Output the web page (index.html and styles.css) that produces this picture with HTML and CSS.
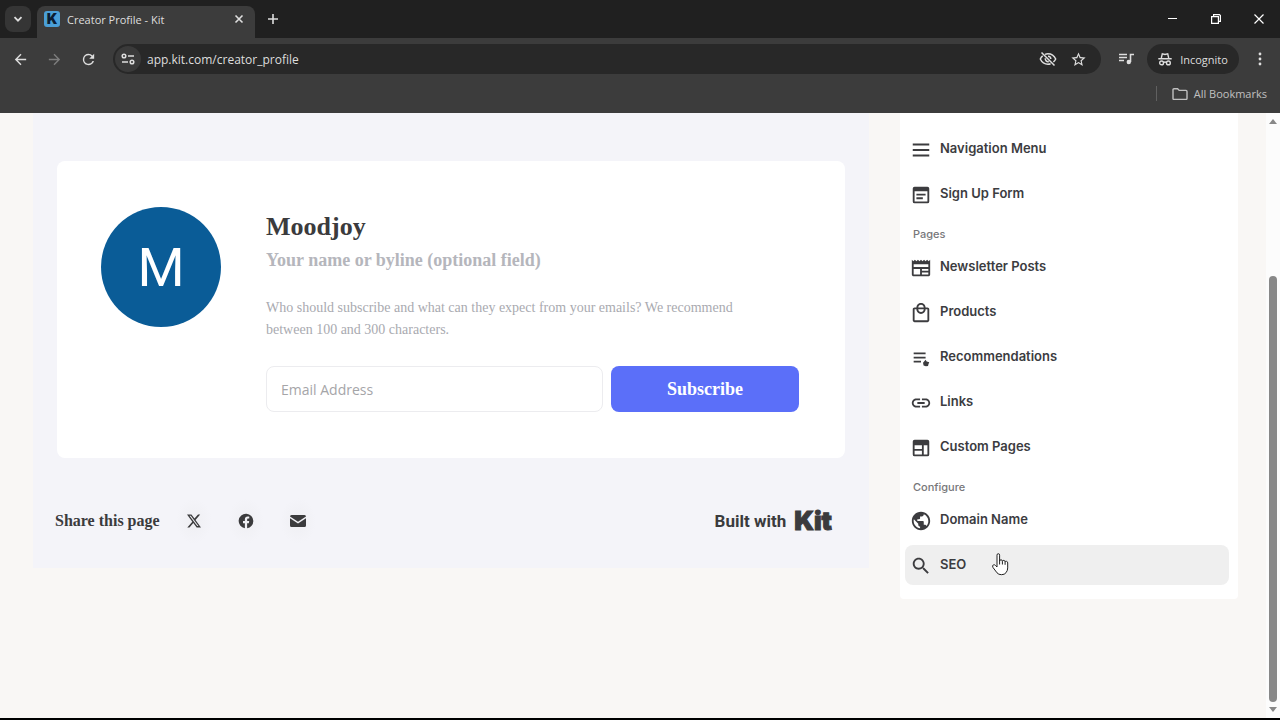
FILE: index.html
```html
<!DOCTYPE html>
<html lang="en">
<head>
  <meta charset="UTF-8">
  <meta name="viewport" content="width=device-width, initial-scale=1.0">
  <title>Creator Profile - Kit</title>
  <link rel="stylesheet" href="styles.css">
</head>
<body>
  <div class="browser">
    <header>
      <div class="tab-strip">
        <button class="tab-search" aria-label="Search tabs">
          <svg width="10" height="10" viewBox="0 0 10 10" fill="none" stroke="currentColor" stroke-width="1.8"><path d="M1.500 3.200 5 6.700 8.500 3.200"/></svg>
        </button>
        <div class="tab">
          <span class="favicon">K</span>
          <span class="tab-title">Creator Profile - Kit</span>
          <button class="icon-button" aria-label="Close tab">
            <svg width="10" height="10" viewBox="0 0 10 10" stroke="currentColor" stroke-width="1.6"><path d="M1.500 1.500l7 7M8.500 1.500l-7 7"/></svg>
          </button>
        </div>
        <button class="icon-button new-tab" aria-label="New tab">
          <svg width="12" height="12" viewBox="0 0 12 12" stroke="currentColor" stroke-width="1.6"><path d="M6 1v10M1 6h10"/></svg>
        </button>
        <div class="window-buttons">
          <button class="icon-button" aria-label="Minimize">
            <svg width="10" height="10" viewBox="0 0 10 10" stroke="currentColor"><path d="M0 4.500h9"/></svg>
          </button>
          <button class="icon-button" aria-label="Restore">
            <svg width="10" height="10" viewBox="0 0 10 10" fill="none" stroke="currentColor" stroke-width="1.200"><path d="M.6 2.600h6.800v6.800H.6zM2.600 2.600v-2h5.800l1 1v5.800h-2"/></svg>
          </button>
          <button class="icon-button" aria-label="Close">
            <svg width="10" height="10" viewBox="0 0 10 10" stroke="currentColor" stroke-width="1.200"><path d="M.5.5l9 9M9.500.5l-9 9"/></svg>
          </button>
        </div>
      </div>

      <div class="toolbar">
        <button class="icon-button" aria-label="Back">
          <svg width="17" height="17" viewBox="0 0 24 24" fill="currentColor"><path d="M20 11H7.830l5.590-5.590L12 4l-8 8 8 8 1.410-1.410L7.830 13H20v-2z"/></svg>
        </button>
        <button class="icon-button disabled" aria-label="Forward">
          <svg width="17" height="17" viewBox="0 0 24 24" fill="currentColor"><path d="M12 4l-1.410 1.410L16.170 11H4v2h12.170l-5.580 5.590L12 20l8-8z"/></svg>
        </button>
        <button class="icon-button" aria-label="Reload">
          <svg width="17" height="17" viewBox="0 0 24 24" fill="currentColor"><path d="M17.650 6.350A7.960 7.960 0 0 0 12 4a8 8 0 1 0 7.730 10h-2.080A6 6 0 1 1 12 6c1.660 0 3.140.69 4.220 1.780L13 11h7V4l-2.350 2.350z"/></svg>
        </button>
        <div class="address-bar">
          <button class="site-info" aria-label="Site information">
            <svg width="14" height="12" viewBox="0 0 14 12" fill="none" stroke="currentColor" stroke-width="1.500"><circle cx="3" cy="3" r="1.800"/><path d="M7 3h6M1 9h6"/><circle cx="11" cy="9" r="1.800"/></svg>
          </button>
          <input class="url" type="text" value="app.kit.com/creator_profile" aria-label="Address">
          <button class="icon-button" aria-label="Third-party cookies blocked">
            <svg width="18" height="16" viewBox="0 0 18 16" fill="none" stroke="currentColor" stroke-width="1.500"><path d="M6 3.400A8 8 0 0 1 9 2.800c3.500 0 6.200 2 7.700 5.200a9 9 0 0 1-2.300 3M11.600 12.700a8 8 0 0 1-2.600.5C5.500 13.200 2.800 11.200 1.300 8a9 9 0 0 1 2.400-3.100M2.500 1.500l13 13M9 5.200A2.800 2.800 0 0 1 11.800 8M6.400 7.200a2.800 2.800 0 0 0 3.400 3.400"/></svg>
          </button>
          <button class="icon-button" aria-label="Bookmark this tab">
            <svg width="17" height="17" viewBox="0 0 24 24" fill="currentColor"><path d="M22 9.240l-7.190-.62L12 2 9.190 8.630 2 9.240l5.460 4.730L5.820 21 12 17.270 18.180 21l-1.630-7.030L22 9.240zM12 15.400l-3.760 2.270 1-4.280-3.320-2.880 4.380-.38L12 6.100l1.710 4.040 4.380.38-3.320 2.880 1 4.280L12 15.400z"/></svg>
          </button>
        </div>
        <button class="icon-button" aria-label="Media controls">
          <svg width="16" height="14" viewBox="0 0 16 14" fill="none" stroke="currentColor" stroke-width="1.600"><path d="M1 2.500h8M1 5.500h8M1 8.500h5M12.500 10V2.500H16"/><circle cx="10.800" cy="10" r="1.400" fill="currentColor"/></svg>
        </button>
        <button class="incognito">
          <svg width="14" height="14" viewBox="0 0 14 14" fill="none" stroke="currentColor" stroke-width="1.400"><path d="M3.300 6 4.300 1.800l2.700.7 2.700-.7L10.700 6M.3 6.700h13.400M5.600 10.500q1.400-1 2.800 0"/><circle cx="3.600" cy="10.900" r="1.900"/><circle cx="10.400" cy="10.900" r="1.900"/></svg>
          Incognito
        </button>
        <button class="icon-button" aria-label="Browser menu">
          <svg width="4" height="14" viewBox="0 0 4 14" fill="currentColor"><circle cx="2" cy="2" r="1.400"/><circle cx="2" cy="7" r="1.400"/><circle cx="2" cy="12" r="1.400"/></svg>
        </button>
      </div>

      <div class="bookmarks-bar">
        <button class="bookmarks">
          <svg width="16" height="12" viewBox="0 0 16 12" fill="none" stroke="currentColor" stroke-width="1.400"><path d="M1 1.700q0-1 1-1h3.600l1.600 1.700H14q1 0 1 1v7q0 1-1 1H2q-1 0-1-1z"/></svg>
          All Bookmarks
        </button>
      </div>
    </header>

    <div class="viewport">
      <div class="page">
        <main class="preview">
          <section class="profile-card">
            <div class="avatar">M</div>
            <div class="profile">
              <h1>Moodjoy</h1>
              <p class="byline">Your name or byline (optional field)</p>
              <p class="description">Who should subscribe and what can they expect from your emails? We recommend between 100 and 300 characters.</p>
              <form class="subscribe-form">
                <input type="email" placeholder="Email Address" aria-label="Email Address">
                <button type="submit">Subscribe</button>
              </form>
            </div>
          </section>
          <footer class="share">
            <span class="share-label">Share this page</span>
            <a href="#" class="share-link" aria-label="Share on X">
              <svg width="14" height="14" viewBox="0 0 24 24" fill="currentColor"><path d="M18.900 1h3.700l-8 9.200L24 23h-7.400l-5.800-7.600L4.200 23H.5l8.600-9.800L0 1h7.600l5.200 6.900zm-1.300 19.700h2L6.500 3.100H4.300z"/></svg>
            </a>
            <a href="#" class="share-link" aria-label="Share on Facebook">
              <svg width="16" height="16" viewBox="0 0 24 24" fill="currentColor"><path d="M23 12a11 11 0 1 0-12.700 10.900v-7.700H7.500V12h2.800V9.600c0-2.800 1.600-4.300 4.100-4.300 1.200 0 2.500.2 2.500.2v2.700h-1.400c-1.400 0-1.800.9-1.800 1.700V12h3.100l-.5 3.200h-2.600v7.700A11 11 0 0 0 23 12z"/></svg>
            </a>
            <a href="#" class="share-link" aria-label="Share by email">
              <svg width="16" height="12" viewBox="0 0 16 12" fill="currentColor"><path d="M1.500 0h13Q16 0 16 1.500L8 6.800 0 1.500Q0 0 1.500 0zM0 3.200l8 5.300 8-5.300v7.300q0 1.500-1.500 1.500h-13Q0 12 0 10.500z"/></svg>
            </a>
            <a href="#" class="built-with">Built with <strong>Kit</strong></a>
          </footer>
        </main>

        <aside class="sidebar">
          <nav>
            <a href="#" class="item">
              <svg viewBox="0 0 24 24"><path d="M3 19h18v-2H3v2zm0-6h18v-2H3v2zm0-8v2h18V5H3z"/></svg>
              Navigation Menu
            </a>
            <a href="#" class="item">
              <svg viewBox="0 0 24 24"><path fill-rule="evenodd" d="M5 3h14a2 2 0 0 1 2 2v14a2 2 0 0 1-2 2H5a2 2 0 0 1-2-2V5q0-2 2-2zm0 5v11h14V8zm2 2.500h10v2H7zm0 4h7v2H7z"/></svg>
              Sign Up Form
            </a>
            <h2>Pages</h2>
            <a href="#" class="item">
              <svg viewBox="0 0 24 24"><path fill-rule="evenodd" d="M22 3l-1.670 1.670L18.670 3 17 4.670 15.330 3l-1.660 1.670L12 3l-1.670 1.670L8.670 3 7 4.670 5.330 3 3.670 4.670 2 3v16c0 1.100.9 2 2 2h16c1.100 0 2-.9 2-2V3zM11 19H4v-6h7v6zm9 0h-7v-2h7v2zm0-4h-7v-2h7v2zm0-4H4V8h16v3z"/></svg>
              Newsletter Posts
            </a>
            <a href="#" class="item">
              <svg viewBox="0 0 24 24"><path d="M19 6h-2c0-2.760-2.240-5-5-5S7 3.240 7 6H5c-1.100 0-2 .9-2 2v12c0 1.100.9 2 2 2h14c1.100 0 2-.9 2-2V8c0-1.100-.9-2-2-2zm-7-3c1.660 0 3 1.340 3 3H9c0-1.660 1.340-3 3-3zm7 17H5V8h2c0 2.760 2.240 5 5 5s5-2.240 5-5h2v12zm-7-9c-1.660 0-3-1.340-3-3h6c0 1.660-1.340 3-3 3z"/></svg>
              Products
            </a>
            <a href="#" class="item">
              <svg viewBox="0 0 24 24"><path d="M4 6h13v2H4zM4 10.500h13v2H4zM4 15h8v2H4zM17 14l1.200 1.700 2.800.8-.9 2.300-.4 2-2.400.2-2.500-.8-.6-3z"/></svg>
              Recommendations
            </a>
            <a href="#" class="item">
              <svg viewBox="0 0 24 24"><path d="M3.900 12c0-1.710 1.390-3.100 3.100-3.100h4V7H7c-2.760 0-5 2.240-5 5s2.240 5 5 5h4v-1.900H7c-1.710 0-3.100-1.390-3.100-3.100zM8 13h8v-2H8v2zm9-6h-4v1.900h4c1.710 0 3.100 1.390 3.100 3.100s-1.390 3.100-3.100 3.100h-4V17h4c2.760 0 5-2.240 5-5s-2.240-5-5-5z"/></svg>
              Links
            </a>
            <a href="#" class="item">
              <svg viewBox="0 0 24 24"><path fill-rule="evenodd" d="M5 3h14a2 2 0 0 1 2 2v14a2 2 0 0 1-2 2H5a2 2 0 0 1-2-2V5q0-2 2-2zm0 6v4h8V9zm0 6v4h8v-4zm10-6v10h4V9z"/></svg>
              Custom Pages
            </a>
            <h2>Configure</h2>
            <a href="#" class="item">
              <svg viewBox="0 0 24 24"><path d="M12 2C6.480 2 2 6.480 2 12s4.480 10 10 10 10-4.480 10-10S17.520 2 12 2zm-1 17.930c-3.950-.49-7-3.850-7-7.930 0-.62.08-1.210.21-1.790L9 15v1c0 1.100.9 2 2 2v1.930zm6.900-2.540c-.26-.81-1-1.390-1.900-1.390h-1v-3c0-.55-.45-1-1-1H8v-2h2c.55 0 1-.45 1-1V7h2c1.100 0 2-.9 2-2v-.41c2.930 1.190 5 4.060 5 7.410 0 2.080-.8 3.970-2.100 5.390z"/></svg>
              Domain Name
            </a>
            <a href="#" class="item hovered">
              <svg viewBox="0 0 24 24"><path d="M15.500 14h-.79l-.28-.27C15.410 12.590 16 11.110 16 9.500 16 5.910 13.090 3 9.500 3S3 5.910 3 9.500 5.910 16 9.500 16c1.610 0 3.090-.59 4.230-1.570l.27.28v.79l5 4.990L20.490 19l-4.990-5zm-6 0C7.010 14 5 11.990 5 9.500S7.010 5 9.500 5 14 7.010 14 9.500 11.990 14 9.500 14z"/></svg>
              SEO
              <svg class="pointer" viewBox="0 0 17 23"><path fill="#fff" stroke="#222" d="M5 14V2.200q0-1.500 1.300-1.500t1.300 1.500V8q.2-1.300 1.500-1.200 1.200.1 1.300 1.400.3-.9 1.400-.8 1.200.1 1.300 1.400.4-.7 1.400-.5 1.200.3 1.200 1.600v5q0 2.500-1.600 4.700-1.500 2.100-4.600 2.100-3 0-4.500-1.900L1 14.500q-1-1.800.3-2.600 1.200-.6 2.300.7zM7.600 8v3.500M10.400 8.200v3.300M13.100 8.800v3"/></svg>
            </a>
          </nav>
        </aside>
      </div>
      <div class="scrollbar">
        <span class="arrow up"></span>
        <span class="thumb"></span>
        <span class="arrow down"></span>
      </div>
    </div>
  </div>
</body>
</html>
```
FILE: styles.css
```css
* {
  box-sizing: border-box;
}

body {
  margin: 0;
  background-color: #000;
  font-family: "Open Sans", "Noto Sans", sans-serif;
}

button {
  margin: 0;
  padding: 0;
  border: none;
  background: none;
  color: inherit;
  font-family: inherit;
  cursor: pointer;
}

a {
  color: inherit;
  text-decoration: none;
}

h1, h2, p {
  margin: 0;
}

svg {
  display: block;
  flex: none;
}

.browser {
  display: flex;
  flex-direction: column;
  min-height: 100vh;
  border-bottom: 2px solid #000;
}

/* browser chrome */
header {
  background-color: #3c3c3c;
  color: #dedede;
  font-size: 12px;
}

.tab-strip {
  display: flex;
  align-items: center;
  height: 38px;
  padding-left: 5px;
  background-color: #202020;
}

.tab-search {
  display: flex;
  align-items: center;
  justify-content: center;
  width: 26px;
  height: 26px;
  border-radius: 8px;
  background-color: #353535;
}

.tab {
  display: flex;
  align-items: center;
  align-self: flex-end;
  width: 218px;
  height: 32px;
  margin-left: 6px;
  padding: 0 7px 6px;
  border-radius: 8px 8px 0 0;
  background-color: #3c3c3c;
}

.favicon {
  width: 16px;
  height: 16px;
  border-radius: 3px;
  background-color: #4a9fd8;
  color: #0b1d33;
  font-family: Inter, sans-serif;
  font-size: 14px;
  font-weight: 900;
  line-height: 16px;
  text-align: center;
}

.tab-title {
  flex: 1;
  margin-left: 7px;
  font-size: 11px;
}

.icon-button {
  display: flex;
  align-items: center;
  justify-content: center;
  width: 18px;
  height: 24px;
}

.new-tab {
  margin-left: 9px;
}

.window-buttons {
  display: flex;
  gap: 25px;
  margin-left: auto;
  margin-right: 12px;
  color: #fff;
}

.toolbar {
  display: flex;
  align-items: center;
  gap: 16px;
  height: 42px;
  padding: 0 11px;
}

.disabled {
  color: #7d7d7d;
}

.address-bar {
  display: flex;
  flex: 1;
  align-items: center;
  gap: 12px;
  height: 30px;
  padding: 0 14px 0 2px;
  border-radius: 15px;
  background-color: #282828;
}

.site-info {
  display: flex;
  align-items: center;
  justify-content: center;
  width: 26px;
  height: 26px;
  border-radius: 13px;
  background-color: #3a3a3a;
}

.url {
  flex: 1;
  min-width: 0;
  margin-left: -6px;
  padding: 0;
  border: none;
  outline: none;
  background: none;
  color: #dedede;
  font-family: inherit;
  font-size: 12px;
}

.incognito {
  display: flex;
  align-items: center;
  justify-content: center;
  gap: 8px;
  width: 92px;
  height: 30px;
  margin: 0 -4px;
  border-radius: 15px;
  background-color: #282828;
  font-size: 11px;
}

.bookmarks-bar {
  display: flex;
  align-items: center;
  justify-content: flex-end;
  height: 33px;
  padding: 0 13px 6px 0;
  color: #c0c0c0;
}

.bookmarks {
  display: flex;
  align-items: center;
  gap: 6px;
  padding-left: 15px;
  border-left: 1px solid #606060;
  font-size: 11px;
}

/* page */
.viewport {
  display: flex;
  flex: 1;
}

.page {
  display: grid;
  flex: 1;
  grid-template-columns: 1fr 338px;
  gap: 31px;
  align-items: start;
  padding: 0 28px 30px 33px;
  background-color: #f9f7f5;
}

.preview {
  padding: 48px 24px 24px;
  background-color: #f4f4f9;
  color: #3b3b3d;
  font-family: Georgia, "Liberation Serif", serif;
}

.profile-card {
  display: flex;
  gap: 45px;
  padding: 46px 46px 46px 44px;
  border-radius: 8px;
  background-color: #fff;
}

.avatar {
  flex: none;
  width: 120px;
  height: 120px;
  border-radius: 50%;
  background-color: #0a5c97;
  color: #fff;
  font-family: Roboto, sans-serif;
  font-size: 54px;
  line-height: 122px;
  text-align: center;
}

.profile {
  flex: 1;
}

h1 {
  font-size: 26px;
  line-height: 40px;
}

.byline {
  color: #b5b6bc;
  font-size: 18px;
  font-weight: bold;
  line-height: 26px;
}

.description {
  max-width: 500px;
  margin: 24px 0 25px;
  color: #a9aab0;
  font-size: 14px;
  line-height: 22px;
}

.subscribe-form {
  display: flex;
  gap: 8px;
}

.subscribe-form input {
  flex: 1;
  min-width: 0;
  height: 46px;
  padding: 0 14px;
  border: 1px solid #ececef;
  border-radius: 8px;
  background-color: #fff;
  font-family: "Open Sans", sans-serif;
  font-size: 14px;
}

.subscribe-form input::placeholder {
  color: #a5a5a8;
}

.subscribe-form button {
  width: 188px;
  border-radius: 8px;
  background-color: #5b6ff9;
  color: #fff;
  font-size: 18px;
  font-weight: bold;
}

.share {
  display: flex;
  align-items: center;
  gap: 16px;
  margin: 40px 13px 0 -2px;
}

.share-label {
  font-size: 16px;
  font-weight: bold;
}

.share-link {
  display: flex;
  align-items: center;
  justify-content: center;
  width: 36px;
  height: 46px;
  border-radius: 18px;
  background: radial-gradient(#efeff3, #f4f4f9 70%);
}

.built-with {
  display: flex;
  align-items: center;
  gap: 8px;
  margin-left: auto;
  font-family: Roboto, sans-serif;
  font-size: 17px;
  font-weight: bold;
}

.built-with strong {
  font-family: Inter, sans-serif;
  font-size: 26px;
  font-weight: 900;
  line-height: 26px;
  -webkit-text-stroke: 1px currentColor;
}

.sidebar {
  padding: 16px 9px 14px 5px;
  border-radius: 0 0 4px 4px;
  background-color: #fff;
  color: #3c3c3f;
  font-family: Inter, sans-serif;
}

.item {
  display: flex;
  position: relative;
  align-items: center;
  gap: 8px;
  height: 40px;
  padding: 0 0 2px 5px;
  border-radius: 8px;
  font-size: 13px;
  font-weight: 600;
}

.item + .item {
  margin-top: 5px;
}

.item svg {
  width: 22px;
  height: 22px;
  margin-top: 3px;
  fill: currentColor;
}

.hovered {
  background-color: #efefef;
}

.item .pointer {
  position: absolute;
  top: 8px;
  left: 87px;
  width: 17px;
  height: 23px;
  margin: 0;
}

.sidebar h2 {
  height: 33px;
  padding: 10px 0 0 8px;
  color: #77777a;
  font-size: 11px;
  font-weight: 500;
  line-height: 20px;
}

.scrollbar {
  display: flex;
  flex-direction: column;
  align-items: center;
  width: 14px;
  padding: 6px 0;
  background-color: #fcfcfc;
}

.arrow {
  border: 4px solid transparent;
}

.up {
  border-top: 0;
  border-bottom: 5px solid #888;
}

.down {
  border-top: 5px solid #888;
  border-bottom: 0;
}

.thumb {
  flex: 1;
  width: 8px;
  margin: 152px 0 5px;
  border-radius: 4px;
  background-color: #888;
}
```
